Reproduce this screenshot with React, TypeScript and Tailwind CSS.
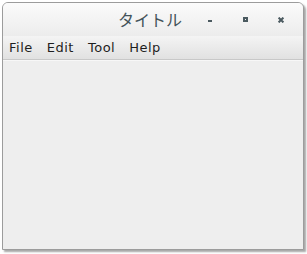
import React from 'react';

const menus = ['File', 'Edit', 'Tool', 'Help'];

function WindowButtons() {
  return (
    <div className="flex items-center">
      {/* minimize */}
      <div className="w-[35px] h-[33px] flex items-center justify-center">
        <div className="w-[4px] h-[2px] mt-[3px] bg-[#4b5a60]" />
      </div>
      {/* maximize */}
      <div className="w-[36px] h-[33px] flex items-center justify-center">
        <div className="w-[5px] h-[5px] border-[2px] border-[#4b5a60]" />
      </div>
      {/* close */}
      <div className="w-[36px] h-[33px] flex items-center justify-center">
        <svg width="6" height="6" viewBox="0 0 6 6">
          <path d="M0.6 0.6 L5.4 5.4 M5.4 0.6 L0.6 5.4" stroke="#4b5a60" strokeWidth="2" />
        </svg>
      </div>
    </div>
  );
}

export default function App() {
  return (
    <div className="w-[307px] h-[254px] bg-white pt-[2px] pl-[2px]">
      <div className="w-[302px] h-[248px] flex flex-col border border-[#9c9c9c] rounded-t-[6px] overflow-hidden bg-[#eeeeee] shadow-[2px_2px_2px_rgba(0,0,0,0.35)]">
        {/* Title bar */}
        <div className="h-[33px] flex items-center bg-gradient-to-b from-[#fbfbfb] to-[#ececec]">
          <div className="flex-1 pl-[115px]">
            <span
              className="text-[16px] leading-none text-[#44535a]"
              style={{ fontFamily: '"Noto Sans CJK JP", sans-serif' }}
            >
              タイトル
            </span>
          </div>
          <div className="pr-[4px]">
            <WindowButtons />
          </div>
        </div>

        {/* Menu bar */}
        <div
          className="h-[24px] flex items-center gap-[2px] bg-gradient-to-b from-[#f4f4f4] to-[#e1e1e1] border-b border-[#c8c8c8]"
          style={{ fontFamily: '"DejaVu Sans", sans-serif' }}
        >
          {menus.map((m) => (
            <span key={m} className="px-[6px] text-[13px] leading-none tracking-[0.5px] text-[#1e1e1e]">
              {m}
            </span>
          ))}
        </div>

        {/* Content */}
        <div className="flex-1 bg-[#eeeeee] border-t border-[#f7f7f7]" />
      </div>
    </div>
  );
}
